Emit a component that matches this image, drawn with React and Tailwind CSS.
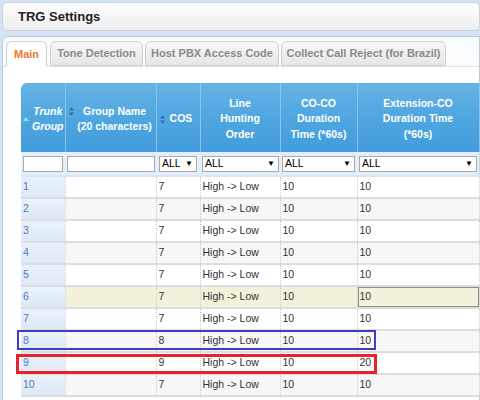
import React from 'react';

const ROWS = [
  { n: 1, cos: 7, ext: 10 },
  { n: 2, cos: 7, ext: 10 },
  { n: 3, cos: 7, ext: 10 },
  { n: 4, cos: 7, ext: 10 },
  { n: 5, cos: 7, ext: 10 },
  { n: 6, cos: 7, ext: 10, selected: true },
  { n: 7, cos: 7, ext: 10 },
  { n: 8, cos: 8, ext: 10 },
  { n: 9, cos: 9, ext: 20 },
  { n: 10, cos: 7, ext: 10 },
];

const TABS = [
  { label: 'Main', w: 'w-[41px]', active: true },
  { label: 'Tone Detection', w: 'w-[93px]' },
  { label: 'Host PBX Access Code', w: 'w-[134px]' },
  { label: 'Collect Call Reject (for Brazil)', w: 'w-[165px]' },
];

function SortBoth() {
  return (
    <svg width="5" height="9" viewBox="0 0 5 9" className="shrink-0">
      <path d="M2.5 0 L5 3.5 L0 3.5 Z" fill="#2f6fa8" />
      <path d="M0 5.5 L5 5.5 L2.5 9 Z" fill="#2f6fa8" />
    </svg>
  );
}

function SortUp() {
  return (
    <svg width="6" height="4" viewBox="0 0 6 4" className="shrink-0">
      <path d="M3 0 L6 4 L0 4 Z" fill="#a9d3f2" />
    </svg>
  );
}

function Select({ w, text = 'ALL' }) {
  return (
    <div className={`${w} h-[16px] bg-white border border-[#a9a9a9] flex items-center justify-between pl-[2px] pr-[3px] text-[10.5px] text-black`}>
      <span>{text}</span>
      <span className="text-[8px]">▼</span>
    </div>
  );
}

export default function App() {
  return (
    <div className="w-[480px] h-[400px] overflow-hidden bg-[#d3e3f3] pt-[2px] pl-[2px] font-['Liberation_Sans',Arial,sans-serif]">
      <div className="h-[29px] rounded-[5px] border border-[#cbd3db] bg-gradient-to-b from-white to-[#ededed] flex items-center pl-[15px] text-[13px] font-bold text-[#222]">
        TRG Settings
      </div>

      <div className="mt-[5px] h-[400px] rounded-tl-[6px] border border-[#b7cbe0] bg-[#fafbfc]">
        <div className="flex items-end h-[30px] pl-[3px] border-b border-[#e2e2e2]">
          {TABS.map((t, i) => (
            <div
              key={t.label}
              className={`${t.w} ${i === 0 ? '' : i === 1 ? 'ml-[3px]' : 'ml-[2px]'} h-[25px] rounded-t-[6px] border border-[#cfcfcf] flex items-center justify-center text-[11px] font-bold ${
                t.active
                  ? 'bg-white border-b-white text-[#e8792b] -mb-px h-[26px]'
                  : 'bg-gradient-to-b from-[#f8f8f8] to-[#e6e6e6] text-[#8a8a8a]'
              }`}
            >
              {t.label}
            </div>
          ))}
        </div>

        <div className="bg-white h-[400px] pl-[18px] pt-[16px]">
          <div className="relative">
            <table className="table-fixed border-collapse w-[487px]">
              <colgroup>
                <col className="w-[44px]" />
                <col className="w-[91px]" />
                <col className="w-[44px]" />
                <col className="w-[80px]" />
                <col className="w-[77px]" />
                <col className="w-[122px]" />
                <col className="w-[29px]" />
              </colgroup>
              <thead>
                <tr className="h-[69px] bg-gradient-to-b from-[#66b3e6] via-[#4fa6e0] to-[#419ddc] text-white text-[10.5px] font-bold leading-[15.5px]">
                  <th className="rounded-tl-[6px] border-r border-[#8ac4ec] p-0 pt-[3px]">
                    <div className="flex items-center pl-[2px]">
                      <SortUp />
                      <span className="flex-1 text-center italic pl-[2px]">Trunk<br />Group</span>
                    </div>
                  </th>
                  <th className="border-r border-[#8ac4ec] p-0 pt-[3px]">
                    <div className="flex items-start pl-[3px]">
                      <div className="mt-[3px]"><SortBoth /></div>
                      <span className="flex-1 text-center">Group Name<br />(20 characters)</span>
                    </div>
                  </th>
                  <th className="border-r border-[#8ac4ec] p-0 pt-[3px]">
                    <div className="flex items-center pl-[3px]">
                      <SortBoth />
                      <span className="flex-1 text-center pr-[2px]">COS</span>
                    </div>
                  </th>
                  <th className="border-r border-[#8ac4ec] p-0 pt-[3px] text-center">Line<br />Hunting<br />Order</th>
                  <th className="border-r border-[#8ac4ec] p-0 pt-[3px] text-center">CO-CO<br />Duration<br />Time (*60s)</th>
                  <th className="border-r border-[#8ac4ec] p-0 pt-[3px] text-center">Extension-CO<br />Duration Time<br />(*60s)</th>
                  <th className="p-0"></th>
                </tr>
              </thead>
              <tbody>
                <tr className="h-[24px] bg-[#e2eef9] border-b-2 border-[#d8e6f4]">
                  <td className="p-0 pl-[2px]"><div className="w-[40px] h-[16px] bg-white border border-[#a9a9a9]" /></td>
                  <td className="p-0 pl-[2px]"><div className="w-[88px] h-[16px] bg-white border border-[#a9a9a9]" /></td>
                  <td className="p-0 pl-[3px]"><Select w="w-[38px]" /></td>
                  <td className="p-0 pl-[2px]"><Select w="w-[77px]" /></td>
                  <td className="p-0 pl-[2px]"><Select w="w-[73px]" /></td>
                  <td className="p-0 pl-[2px]"><Select w="w-[118px]" /></td>
                  <td className="p-0 border-l border-[#c9d9ea]"></td>
                </tr>
                {ROWS.map((r, i) => {
                  const bg = r.selected ? 'bg-[#f3f1db]' : i % 2 === 1 ? 'bg-[#f7f7f7]' : 'bg-white';
                  return (
                    <tr key={r.n} className={`h-[22px] ${bg} border-b-2 border-[#dddddd] text-[10.5px] text-[#333]`}>
                      <td className="p-0 pl-[2px] bg-gradient-to-b from-[#e9f2fb] to-[#dce9f7] text-[#4d7db9] border-r border-dotted border-[#c5d3e2]">{r.n}</td>
                      <td className="p-0 border-r border-dotted border-[#cccccc]"></td>
                      <td className="p-0 pl-[2px] border-r border-dotted border-[#cccccc]">{r.cos}</td>
                      <td className="p-0 pl-[2px] border-r border-dotted border-[#cccccc]">High -&gt; Low</td>
                      <td className="p-0 pl-[2px] border-r border-dotted border-[#cccccc]">10</td>
                      <td className={`p-0 pl-[2px] border-r border-dotted border-[#cccccc] ${r.selected ? 'shadow-[inset_0_0_0_1px_#8c8c8c]' : ''}`}>{r.ext}</td>
                      <td className="p-0"></td>
                    </tr>
                  );
                })}
              </tbody>
            </table>

            <div className="absolute left-[-4px] top-[247px] w-[359px] h-[20px] border-2 border-[#3d3dc4] pointer-events-none" />
            <div className="absolute left-[-5px] top-[271px] w-[361px] h-[20px] border-[3px] border-[#e8222b] pointer-events-none" />
          </div>
        </div>
      </div>
    </div>
  );
}
